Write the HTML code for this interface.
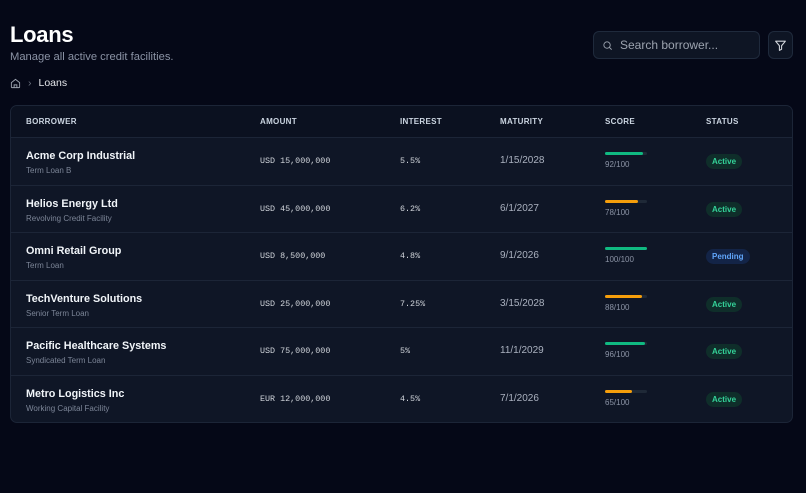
<!DOCTYPE html>
<html><head><style>
*{margin:0;padding:0;box-sizing:border-box}
body{width:806px;height:493px;background:#050817;font-family:"Liberation Sans",sans-serif;color:#e5e7eb;position:relative;overflow:hidden}
h1{position:absolute;left:10px;top:22px;font-size:22px;font-weight:bold;color:#fff;letter-spacing:-0.3px}
.sub{position:absolute;left:10px;top:51px;font-size:11.2px;color:#8b93a5}
.bc{position:absolute;left:10px;top:77px;font-size:10.5px;color:#e5e7eb;display:flex;align-items:center}
.search{position:absolute;left:593px;top:31px;width:167px;height:28px;border:1px solid #1f2a3c;background:#0e1524;border-radius:6px;font-size:12px;color:#9ca3af;padding-left:26px;line-height:26px}
.filt{position:absolute;left:768px;top:31px;width:25px;height:28px;border:1px solid #1f2a3c;background:#0e1524;border-radius:6px}
.card{position:absolute;left:10px;top:105px;width:783px;height:318px;border:1px solid #1c2537;border-radius:7px;background:#0f1626;overflow:hidden}
.hd{height:32px;background:#0b1120;position:relative;border-bottom:1px solid #1c2537}
.hd span{position:absolute;top:11px;font-size:8px;font-weight:bold;color:#cbd5e1;letter-spacing:0.3px}
.row{height:47.6px;position:relative;border-bottom:1px solid #1c2537}
.row:last-child{border-bottom:none}
.n{position:absolute;left:15px;top:12px;font-size:10.8px;font-weight:bold;color:#f1f5f9}
.t{position:absolute;left:15px;top:28px;font-size:8px;color:#7c8597}
.m{position:absolute;top:18px;font-family:"Liberation Mono",monospace;font-size:8.4px;color:#d1d5db}
.d{position:absolute;left:489px;top:17px;font-size:10px;color:#aab1bf}
.bar{position:absolute;left:594px;top:14px;width:42px;height:3px;background:#1f2937;border-radius:2px}
.bar i{display:block;height:3px;border-radius:2px}
.sc{position:absolute;left:594px;top:22px;font-size:8px;color:#8b93a5}
.st{position:absolute;left:695px;top:16px;font-size:8px;font-weight:bold;padding:3px 6px;border-radius:8px}
.a{background:#0f2e2a;color:#34d399}
.p{background:#132447;color:#60a5fa}
</style></head><body>
<h1>Loans</h1>
<div class="sub">Manage all active credit facilities.</div>
<div class="bc"><svg width="11" height="11" viewBox="0 0 24 24" fill="none" stroke="#9ca3af" stroke-width="2"><path d="M3 10l9-7 9 7v10a1 1 0 0 1-1 1H4a1 1 0 0 1-1-1z"/><path d="M9 21v-6h6v6"/></svg><span style="color:#6b7280;margin:0 7px 0 7px">›</span><span>Loans</span></div>
<div class="search"><svg style="position:absolute;left:8px;top:8px" width="11" height="11" viewBox="0 0 24 24" fill="none" stroke="#9ca3af" stroke-width="2"><circle cx="11" cy="11" r="7"/><path d="M21 21l-5-5"/></svg>Search borrower...</div>
<div class="filt"><svg style="position:absolute;left:5px;top:7px" width="13" height="13" viewBox="0 0 24 24" fill="none" stroke="#d1d5db" stroke-width="2" stroke-linejoin="round"><path d="M3 4h18l-7 8.5V19l-4 2v-8.5z"/></svg></div>
<div class="card">
<div class="hd"><span style="left:15px">BORROWER</span><span style="left:249px">AMOUNT</span><span style="left:389px">INTEREST</span><span style="left:489px">MATURITY</span><span style="left:594px">SCORE</span><span style="left:695px">STATUS</span></div>
<div class="row"><div class="n">Acme Corp Industrial</div><div class="t">Term Loan B</div><div class="m" style="left:249px">USD 15,000,000</div><div class="m" style="left:389px">5.5%</div><div class="d">1/15/2028</div><div class="bar"><i style="width:38px;background:#10b981"></i></div><div class="sc">92/100</div><div class="st a">Active</div></div>
<div class="row"><div class="n">Helios Energy Ltd</div><div class="t">Revolving Credit Facility</div><div class="m" style="left:249px">USD 45,000,000</div><div class="m" style="left:389px">6.2%</div><div class="d">6/1/2027</div><div class="bar"><i style="width:33px;background:#f59e0b"></i></div><div class="sc">78/100</div><div class="st a">Active</div></div>
<div class="row"><div class="n">Omni Retail Group</div><div class="t">Term Loan</div><div class="m" style="left:249px">USD 8,500,000</div><div class="m" style="left:389px">4.8%</div><div class="d">9/1/2026</div><div class="bar"><i style="width:42px;background:#10b981"></i></div><div class="sc">100/100</div><div class="st p">Pending</div></div>
<div class="row"><div class="n">TechVenture Solutions</div><div class="t">Senior Term Loan</div><div class="m" style="left:249px">USD 25,000,000</div><div class="m" style="left:389px">7.25%</div><div class="d">3/15/2028</div><div class="bar"><i style="width:37px;background:#f59e0b"></i></div><div class="sc">88/100</div><div class="st a">Active</div></div>
<div class="row"><div class="n">Pacific Healthcare Systems</div><div class="t">Syndicated Term Loan</div><div class="m" style="left:249px">USD 75,000,000</div><div class="m" style="left:389px">5%</div><div class="d">11/1/2029</div><div class="bar"><i style="width:40px;background:#10b981"></i></div><div class="sc">96/100</div><div class="st a">Active</div></div>
<div class="row"><div class="n">Metro Logistics Inc</div><div class="t">Working Capital Facility</div><div class="m" style="left:249px">EUR 12,000,000</div><div class="m" style="left:389px">4.5%</div><div class="d">7/1/2026</div><div class="bar"><i style="width:27px;background:#f59e0b"></i></div><div class="sc">65/100</div><div class="st a">Active</div></div>
</div>
</body></html>
